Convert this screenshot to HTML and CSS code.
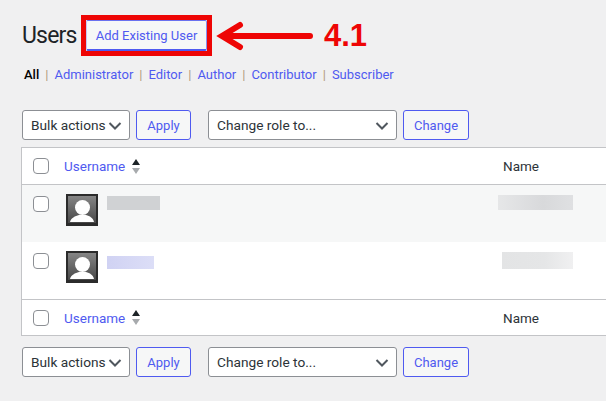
FILE: index.html
```html
<!DOCTYPE html>
<html lang="en">
<head>
    <meta charset="UTF-8">
    <meta name="viewport" content="width=device-width, initial-scale=1.0">
    <title>Users</title>
    <link rel="stylesheet" href="styles.css">
</head>
<body>
    <!-- Title -->
    <div class="title-row">
        <h1>Users</h1>
        <div class="red-box"><a href="#" class="btn add-btn">Add Existing User</a></div>
        <svg class="arrow" width="100" height="40" viewBox="0 0 100 40">
            <path d="M95 20H8M25 9L7 20L25 31" fill="none" stroke="#ee0505" stroke-width="6" stroke-linecap="round"/>
        </svg>
        <span class="step">4.1</span>
    </div>

    <!-- Roles -->
    <ul class="roles">
        <li class="current">All</li>
        <li><a href="#">Administrator</a></li>
        <li><a href="#">Editor</a></li>
        <li><a href="#">Author</a></li>
        <li><a href="#">Contributor</a></li>
        <li><a href="#">Subscriber</a></li>
    </ul>

    <div class="tablenav top">
        <div class="select bulk">Bulk actions
            <svg width="14" height="8" viewBox="0 0 14 8"><path d="M1.5 1L7 6.5L12.5 1" fill="none" stroke="#50575e" stroke-width="2"/></svg>
        </div>
        <a href="#" class="btn apply">Apply</a>
        <div class="select role">Change role to...
            <svg width="14" height="8" viewBox="0 0 14 8"><path d="M1.5 1L7 6.5L12.5 1" fill="none" stroke="#50575e" stroke-width="2"/></svg>
        </div>
        <a href="#" class="btn change">Change</a>
    </div>

    <!-- Table -->
    <div class="users-table">
        <div class="row head">
            <span class="check"></span>
            <a href="#" class="sort">Username</a>
            <span class="arrows"><i class="up"></i><i class="down"></i></span>
            <span class="name-col">Name</span>
        </div>
        <div class="row user alt">
            <span class="check"></span>
            <svg class="avatar" width="32" height="32" viewBox="0 0 32 32">
                <defs>
                    <linearGradient id="av" x1="0" y1="0" x2="0" y2="1">
                        <stop offset="0" stop-color="#858585"/>
                        <stop offset="1" stop-color="#484848"/>
                    </linearGradient>
                </defs>
                <rect width="32" height="32" fill="#2b2b2b"/>
                <rect x="2" y="2" width="28" height="27" fill="url(#av)"/>
                <circle cx="16.5" cy="13.5" r="7.5" fill="#fff"/>
                <path d="M4 28C5 24 9 22 13 21H20C24 22 27 24 28 28Z" fill="#fff"/>
            </svg>
            <span class="blur blur-user1"></span>
            <span class="blur blur-name1"></span>
        </div>
        <div class="row user">
            <span class="check"></span>
            <svg class="avatar" width="32" height="32" viewBox="0 0 32 32">
                <rect width="32" height="32" fill="#2b2b2b"/>
                <rect x="2" y="2" width="28" height="27" fill="url(#av)"/>
                <circle cx="16.5" cy="13.5" r="7.5" fill="#fff"/>
                <path d="M4 28C5 24 9 22 13 21H20C24 22 27 24 28 28Z" fill="#fff"/>
            </svg>
            <span class="blur blur-user2"></span>
            <span class="blur blur-name2"></span>
        </div>
        <div class="row foot">
            <span class="check"></span>
            <a href="#" class="sort">Username</a>
            <span class="arrows"><i class="up"></i><i class="down"></i></span>
            <span class="name-col">Name</span>
        </div>
    </div>

    <div class="tablenav bottom">
        <div class="select bulk">Bulk actions
            <svg width="14" height="8" viewBox="0 0 14 8"><path d="M1.5 1L7 6.5L12.5 1" fill="none" stroke="#50575e" stroke-width="2"/></svg>
        </div>
        <a href="#" class="btn apply">Apply</a>
        <div class="select role">Change role to...
            <svg width="14" height="8" viewBox="0 0 14 8"><path d="M1.5 1L7 6.5L12.5 1" fill="none" stroke="#50575e" stroke-width="2"/></svg>
        </div>
        <a href="#" class="btn change">Change</a>
    </div>
</body>
</html>
```

FILE: styles.css
```css
* {
    margin: 0;
    padding: 0;
    box-sizing: border-box;
}

html, body {
    height: 401px;
    overflow: hidden;
}

body {
    background-color: #f0f0f1;
    color: #2c3338;
    font-family: Roboto, "Noto Sans", sans-serif;
    font-size: 13px;
    padding: 15px 0 0 22px;
}

a {
    color: #4f5af0;
    text-decoration: none;
}

/* Title */
.title-row {
    display: flex;
    align-items: center;
    height: 41px;
}
h1 {
    flex: none;
    font-size: 23px;
    font-weight: 400;
    letter-spacing: -0.8px;
    line-height: 41px;
    color: #1d2327;
    width: 59px;
}
.red-box {
    border: 5px solid #ee0505;
    width: 131px;
    height: 41px;
}
.arrow {
    margin: 0 0 0 3px;
}
.step {
    color: #ee0505;
    font-family: "Liberation Sans", sans-serif;
    font-size: 31px;
    font-weight: 700;
    margin-left: 9px;
}

/* Buttons */
.btn {
    display: flex;
    align-items: center;
    justify-content: center;
    height: 30px;
    background-color: #f6f7f7;
    border: 1px solid #4f5af0;
    border-radius: 3px;
}
.add-btn {
    height: 31px;
    border-color: #6a72ef #8a90f2 #4f5af0 #c5c8f5;
    border-bottom-width: 2px;
    border-radius: 2px;
}

/* Roles */
.roles {
    list-style: none;
    display: flex;
    margin-top: 9px;
    padding-left: 2px;
    height: 20px;
    line-height: 20px;
    color: #a7aaad;
}
.roles li + li::before {
    content: "|";
    margin: 0 6px;
    color: #b09a80;
}
.roles .current {
    color: #000;
    font-weight: 500;
}

/* Tablenav */
.tablenav {
    display: flex;
}
.tablenav.top {
    margin-top: 25px;
}
.tablenav.bottom {
    margin-top: 11px;
}
.select {
    display: flex;
    align-items: center;
    justify-content: space-between;
    height: 30px;
    padding: 0 7px 0 8px;
    background-color: #fff;
    border: 1px solid #8c8f94;
    border-radius: 3px;
    font-size: 13.7px;
}
.select svg {
    flex: none;
    margin-top: 2px;
}
.bulk {
    width: 108px;
}
.role {
    width: 189px;
    margin-left: 17px;
}
.apply {
    width: 55px;
    margin-left: 6px;
}
.change {
    width: 66px;
    margin-left: 6px;
}

/* Table */
.users-table {
    margin: 7px 0 0 -1px;
    width: 585px;
    background-color: #fff;
    border: 1px solid #c3c4c7;
    border-right: none;
    font-size: 13.5px;
}
.row {
    display: flex;
    align-items: center;
    padding-left: 11px;
}
.head {
    height: 37px;
    border-bottom: 1px solid #c3c4c7;
}
.foot {
    height: 36px;
    border-top: 1px solid #c3c4c7;
}
.check {
    flex: none;
    width: 16px;
    height: 16px;
    background-color: #fff;
    border: 1px solid #8c8f94;
    border-radius: 4px;
}
.sort {
    flex: none;
    margin-left: 15px;
    width: 63px;
}
.arrows {
    flex: none;
    display: flex;
    flex-direction: column;
    gap: 3px;
    width: 8px;
    margin-left: 5px;
}
.arrows i {
    display: block;
    width: 0;
    height: 0;
    border-left: 4px solid transparent;
    border-right: 4px solid transparent;
}
.up {
    border-bottom: 6px solid #1d2327;
}
.down {
    border-top: 6px solid #a7aaad;
}
.name-col {
    margin-left: 363px;
}
.user {
    height: 57px;
    align-items: flex-start;
    padding-top: 11px;
}
.alt {
    background-color: #f6f7f7;
}
.avatar {
    flex: none;
    margin: -2px 0 0 17px;
}

/* Blurred names */
.blur {
    display: block;
    flex: none;
}
.blur-user1 {
    width: 53px;
    height: 14px;
    margin-left: 9px;
    background-color: #d0d2d4;
}
.blur-name1 {
    width: 75px;
    height: 15px;
    margin: -1px 0 0 338px;
    background: linear-gradient(90deg, #e6e7e8, #d8d9db 60%, #dfe0e2);
}
.blur-user2 {
    width: 47px;
    height: 13px;
    margin: 3px 0 0 9px;
    background: linear-gradient(90deg, #d0d2f3, #dcdef7);
}
.blur-name2 {
    width: 71px;
    height: 17px;
    margin: -1px 0 0 348px;
    background: linear-gradient(90deg, #e3e4e5, #e5e6e7 60%, #f0f0f1);
}
```
